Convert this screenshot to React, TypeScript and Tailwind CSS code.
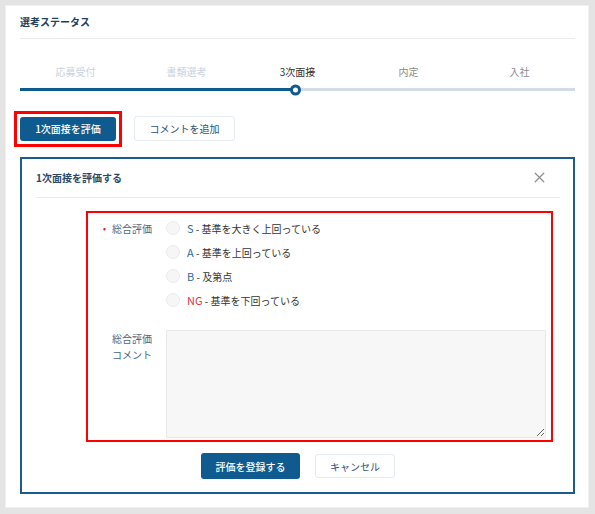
import { X } from 'lucide-react'

const steps = [
    { label: '応募受付', state: 'done' },
    { label: '書類選考', state: 'done' },
    { label: '3次面接', state: 'current' },
    { label: '内定', state: 'todo' },
    { label: '入社', state: 'todo' },
]

const grades = [
    { key: 'S', text: '基準を大きく上回っている', color: 'text-[#2c6aa3]' },
    { key: 'A', text: '基準を上回っている', color: 'text-[#2c6aa3]' },
    { key: 'B', text: '及第点', color: 'text-[#2c6aa3]' },
    { key: 'NG', text: '基準を下回っている', color: 'text-[#e2343c]' },
]

export default function App() {
    return (
        <div
            className="w-[595px] h-[514px] bg-[#e4e4e4] pt-[5px] pl-[5px] pr-[6px] pb-[6px] text-[10px] leading-[15px] text-[#333]"
            style={{ fontFamily: '"Noto Sans CJK JP", "Noto Sans", sans-serif' }}
        >
            <div className="h-full bg-white border border-[#f0f0f0] pl-[14px] pr-[13px] pt-[8px]">
                <h2 className="font-bold text-[#22405d] leading-[15px]">
                    選考ステータス
                </h2>
                <div className="mt-[9px] h-px bg-[#ebebeb]" />

                {/* stepper */}
                <div className="mt-[25px] grid grid-cols-5">
                    {steps.map((step) => (
                        <div
                            key={step.label}
                            className={`text-center ${
                                step.state === 'done'
                                    ? 'text-[#c9d1dd]'
                                    : step.state === 'current'
                                      ? 'text-[#333]'
                                      : 'text-[#8a8a8a]'
                            }`}
                        >
                            {step.label}
                        </div>
                    ))}
                </div>
                <div className="relative mt-[9px] h-[3px] bg-[#d3dbe8]">
                    <div className="h-full w-1/2 bg-[#0f5a8e]" />
                    <div className="absolute left-1/2 top-1/2 -translate-x-[8px] -translate-y-1/2 w-[11px] h-[11px] rounded-full bg-white border-[3px] border-[#0f5a8e]" />
                </div>

                {/* actions */}
                <div className="mt-[25px] flex items-center gap-[18px]">
                    <button className="relative h-[24px] w-[96px] rounded-[3px] bg-[#0f5a8e] text-white font-medium">
                        1次面接を評価
                        <span className="absolute -inset-[6px] border-[3px] border-[#ff0000] pointer-events-none" />
                    </button>
                    <button className="h-[25px] w-[101px] rounded-[3px] bg-white border border-[#e6ebf0] text-[#2f4f6e]">
                        コメントを追加
                    </button>
                </div>

                {/* evaluation panel */}
                <div className="mt-[16px] border-2 border-[#1a5b90] pl-[14px] pr-[13px] pt-[10px] pb-[13px]">
                    <div className="flex items-center justify-between">
                        <h3 className="font-bold text-[#2b4866] leading-[15px]">
                            1次面接を評価する
                        </h3>
                        <X
                            size={17}
                            strokeWidth={1.8}
                            className="mr-[12px] text-[#8f8f8f]"
                        />
                    </div>
                    <div className="mt-[11px] h-px bg-[#ebebeb]" />

                    <div className="mt-[13px] ml-[50px] mr-[7px] border-2 border-[#ff0000] pt-[3px] pb-[2px] pl-[24px] pr-[5px]">
                        <div className="flex gap-[14px]">
                            <div className="relative w-[40px] shrink-0 h-[24px] flex items-center text-[#4a6785]">
                                <span className="absolute -left-[9px] top-[8px] text-[#d0202a] text-[9px] leading-[9px]">
                                    •
                                </span>
                                総合評価
                            </div>
                            <div className="flex flex-col">
                                {grades.map((g) => (
                                    <label
                                        key={g.key}
                                        className="h-[24px] flex items-center gap-[7px]"
                                    >
                                        <span className="w-[14px] h-[14px] rounded-full bg-[#f6f6f6] border border-[#ebebeb]" />
                                        <span>
                                            <span className={`text-[11px] ${g.color}`}>
                                                {g.key}
                                            </span>
                                            <span className="text-[#333]">
                                                {' '}
                                                - {g.text}
                                            </span>
                                        </span>
                                    </label>
                                ))}
                            </div>
                        </div>

                        <div className="mt-[18px] flex gap-[14px]">
                            <div className="w-[40px] shrink-0 pt-[1px] leading-[16px] text-[#4a6785]">
                                総合評価
                                <br />
                                コメント
                            </div>
                            <textarea className="block h-[108px] flex-1 bg-[#f7f7f7] border border-[#e9e9e9] outline-none" />
                        </div>
                    </div>

                    <div className="mt-[11px] flex justify-center gap-[15px]">
                        <button className="h-[26px] w-[99px] rounded-[3px] bg-[#0f5a8e] text-white font-medium">
                            評価を登録する
                        </button>
                        <button className="h-[24px] w-[80px] mt-px rounded-[3px] bg-white border border-[#e6ebf0] text-[#2f4f6e]">
                            キャンセル
                        </button>
                    </div>
                </div>
            </div>
        </div>
    )
}
